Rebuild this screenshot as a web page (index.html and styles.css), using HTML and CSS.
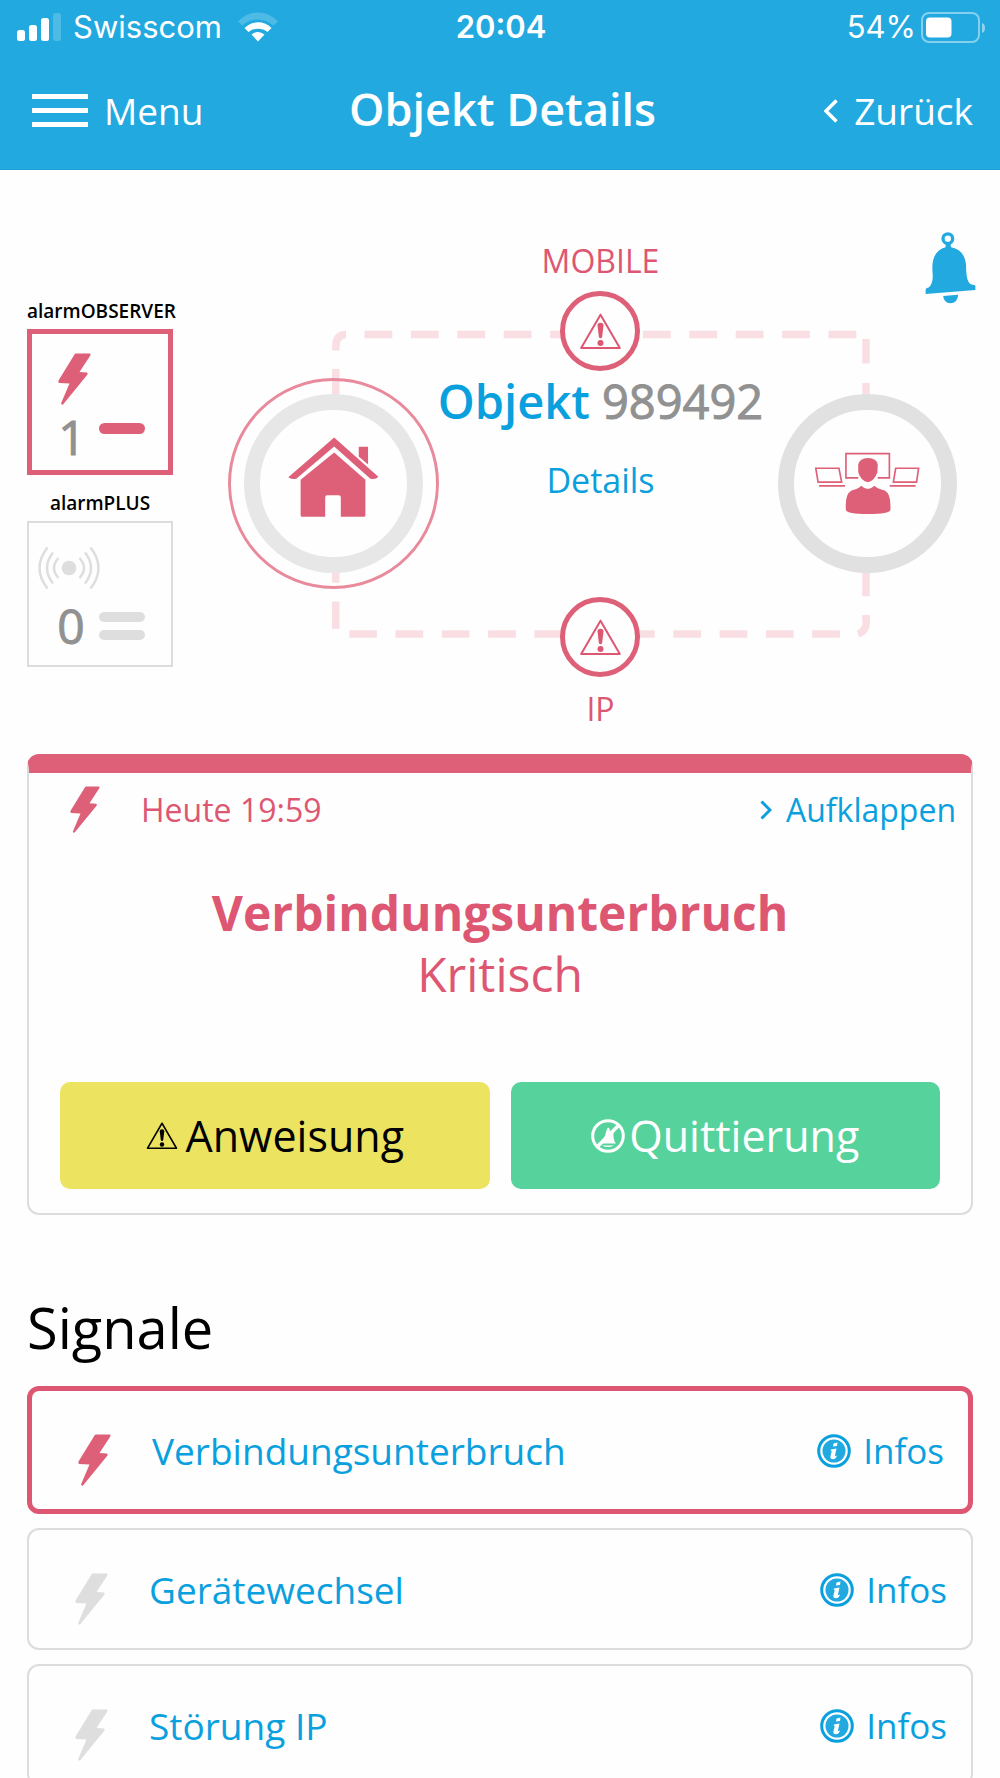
FILE: index.html
```html
<!DOCTYPE html>
<html lang="de">
<head>
<meta charset="utf-8">
<meta name="viewport" content="width=device-width, initial-scale=1">
<title>Objekt Details</title>
<link rel="stylesheet" href="styles.css">
</head>
<body>
<svg class="sprite" aria-hidden="true">
  <symbol id="bolt" viewBox="0 0 33 52"><path d="M18 .5H32Q33 1 32.300 2.500L21.500 19 29 19.500Q30 20.500 29.500 21.500L5 51.500Q3.500 52 3 50.500L11.500 30.500 1 30Q0 29 .5 27.500L16.500 1.500Q17 .5 18 .5Z" fill="currentColor"/></symbol>
  <symbol id="warning" viewBox="0 0 128 114"><path d="M64 8 122 108H6Z" fill="none" stroke="currentColor" stroke-width="6" stroke-linejoin="round"/><path d="M64 32q9 0 9 8l-4 34q-1 5-5 5t-5-5l-4-34q0-8 9-8Z" fill="currentColor"/><circle cx="64" cy="93" r="9" fill="currentColor"/></symbol>
  <symbol id="info" viewBox="0 0 34 34"><circle cx="17" cy="17" r="15.300" fill="none" stroke="#0aa0de" stroke-width="3"/><circle cx="17" cy="17" r="11.500" fill="#22a9e0"/><path d="M16.500 9.500 20.500 8.500 20 12 16 12.500ZM14 15.500 19.500 14.500 17.800 22.300 20 21.500Q19 25 16 25.300 12.800 25.300 13.500 22L14.800 16.700 13.600 16.800Z" fill="#fff"/></symbol>
</svg>
<div class="app">
  <header class="topbar">
    <div class="status">
      <div class="status-left">
        <svg width="44" height="28" viewBox="0 0 44 28" fill="#fff" aria-hidden="true"><rect y="17" width="8" height="11" rx="2.500"/><rect x="12" y="12" width="8" height="16" rx="2.500"/><rect x="24" y="5" width="8" height="23" rx="2.500"/><rect x="36" width="8" height="28" rx="2.500" opacity=".2"/></svg>
        <span>Swisscom</span>
        <svg width="40" height="30" viewBox="0 0 40 30" fill="#fff" aria-hidden="true"><path d="M0 9.500Q9 .5 20 .5T40 9.500L35.500 13.500Q28.500 7.500 20 7.500T4.500 13.500Z" opacity=".2"/><path d="M6.500 16Q12 10.300 20 10.300T33.500 16L29.500 20Q25.500 16.700 20 16.700T10.500 20Z"/><path d="M13.500 22.500Q16.500 20 20 20T26.500 22.500L20 29.500Z"/></svg>
      </div>
      <time class="status-time">20:04</time>
      <div class="status-right">
        <span>54%</span>
        <svg width="64" height="31" viewBox="0 0 64 31" aria-hidden="true"><rect x="1" y="1" width="57" height="29" rx="7" fill="none" stroke="#fff" stroke-width="2" opacity=".45"/><rect x="5" y="5.500" width="25.500" height="20" rx="4" fill="#fff"/><path d="M61 11q3 1 3 5t-3 5Z" fill="#fff" opacity=".5"/></svg>
      </div>
    </div>
    <nav class="nav">
      <button class="nav-link" type="button">
        <svg width="56" height="34" viewBox="0 0 56 34" aria-hidden="true"><path d="M0 2.500H56M0 16.500H56M0 30.500H56" stroke="#fff" stroke-width="5"/></svg>
        Menu
      </button>
      <h1 class="nav-title">Objekt Details</h1>
      <a class="nav-link nav-back" href="#">
        <svg width="14" height="24" viewBox="0 0 14 24" aria-hidden="true"><path d="M12.500 1.500 2 12 12.500 22.500" fill="none" stroke="#fff" stroke-width="3.500"/></svg>
        Zurück
      </a>
    </nav>
  </header>

  <main class="content">
    <section class="overview">
      <button class="bell" type="button" aria-label="Alarm">
        <svg width="53" height="73" viewBox="972 34 158 220" fill="#22a9e0" aria-hidden="true"><circle cx="1043" cy="57" r="14.500" fill="none" stroke="#22a9e0" stroke-width="10"/><path d="M1037 72H1050L1053 83Q1096 92 1098 140Q1098 190 1114 195 1126 195 1126 200V212L976 224V210Q978 204 984 205 1000 195 997 160 991 95 1036 83Z"/><path d="M1029 230 1074 226Q1073 251 1050 252 1031 251 1029 230Z"/></svg>
      </button>

      <div class="tiles">
        <div class="tile-group">
          <h2 class="tile-label">alarmOBSERVER</h2>
          <div class="tile tile-active">
            <svg class="tile-icon" width="39" height="52" viewBox="-6 0 39 52" aria-hidden="true"><use href="#bolt" width="33" height="52"/></svg>
            <span class="tile-count">1</span>
            <span class="bars"><i></i></span>
          </div>
        </div>
        <div class="tile-group">
          <h2 class="tile-label">alarmPLUS</h2>
          <div class="tile">
            <svg class="tile-icon" width="62" height="44" viewBox="0 0 62 44" fill="none" stroke="currentColor" stroke-width="2.500" aria-hidden="true"><circle cx="31" cy="22" r="7.300" fill="currentColor" stroke="none"/><path d="M20.500 12Q11.500 22 20.500 32M15 6.500Q3 22 15 37.500M9.500 1.500Q-6.500 22 9.500 42.500M41.500 12Q50.500 22 41.500 32M47 6.500Q59 22 47 37.500M52.500 1.500Q68.500 22 52.500 42.500"/></svg>
            <span class="tile-count">0</span>
            <span class="bars"><i></i><i></i></span>
          </div>
        </div>
      </div>

      <div class="diagram">
        <svg class="links" width="540" height="322" viewBox="330 324 540 322" fill="none" stroke="#f9dfe3" stroke-width="7.500" aria-hidden="true">
          <path d="M334.800 350.500V347Q334.800 334.500 345 334.500"/>
          <path d="M363.500 334.500H861" stroke-dasharray="27.800 18.600"/>
          <path d="M865 339V363.500M865 383V620" stroke-dasharray="27.600 18.800"/>
          <path d="M865.300 615.500V622Q865.300 631 857 634"/>
          <path d="M348.200 634H845" stroke-dasharray="27.700 18.600"/>
          <path d="M334.800 369V629" stroke-dasharray="27.800 18.700"/>
        </svg>
        <div class="nodes">
          <div class="node node-alert">
            <div class="disc">
              <svg class="house" width="93" height="82" viewBox="230 648 280 246" fill="#de6078" aria-hidden="true"><path d="M372 652 505 770Q497 780 481 776L372 679 258 776Q243 780 234 772Z"/><path d="M446 680H474V733L446 709Z"/><path d="M372 697 466 779V886Q466 891 461 891H392V832Q392 826 386 826H351Q345 826 345 832V891H276Q271 891 271 886V779Z"/></svg>
            </div>
          </div>
          <div class="node">
            <div class="disc disc-station">
              <svg width="107" height="63" viewBox="640 697 320 190" fill="none" stroke="#de6078" stroke-width="5" aria-hidden="true"><path d="M772 775H735V702H866V775H831M644 746H714L722 788H651ZM654 799H732M954 746H885L878 788H948ZM945 799H867"/><path d="M772 735Q776 716 801 715 828 716 831 735L830 758Q820 786 801 788 781 786 772 758ZM781 799Q801 818 821 799 830 808 852 813 872 824 869 872 866 884 801 884 738 884 735 872 731 824 752 813 773 808 781 799Z" fill="#de6078" stroke="none"/></svg>
            </div>
          </div>
        </div>
        <div class="middle">
          <span class="channel">MOBILE</span>
          <span class="badge"><svg width="43" height="38" aria-hidden="true"><use href="#warning"/></svg></span>
          <h2 class="object"><b>Objekt</b> <span class="number">989492</span></h2>
          <a class="details" href="#">Details</a>
          <span class="badge badge-ip"><svg width="43" height="38" aria-hidden="true"><use href="#warning"/></svg></span>
          <span class="channel channel-ip">IP</span>
        </div>
      </div>
    </section>

    <article class="alarm">
      <div class="alarm-head">
        <svg class="alarm-bolt" width="30" height="47" aria-hidden="true"><use href="#bolt"/></svg>
        <time>Heute 19:59</time>
        <a class="expand" href="#">
          <svg width="12" height="20" viewBox="0 0 12 20" aria-hidden="true"><path d="M1.500 1.500 10 10 1.500 18.500" fill="none" stroke="#0aa0de" stroke-width="3"/></svg>
          Aufklappen
        </a>
      </div>
      <h2 class="alarm-title">Verbindungsunterbruch</h2>
      <p class="alarm-level">Kritisch</p>
      <div class="actions">
        <button class="action action-yellow" type="button"><svg width="32" height="29" aria-hidden="true"><use href="#warning"/></svg>Anweisung</button>
        <button class="action action-green" type="button"><svg width="34" height="34" viewBox="0 0 34 34" aria-hidden="true"><circle cx="17" cy="17" r="15.300" fill="none" stroke="#fff" stroke-width="3"/><path d="M6 28 28 6" stroke="#fff" stroke-width="3.500"/><path d="M16.500 9Q18 8 18.500 10L20 14 22.500 12Q22 22 25 24.500H9.500Q14 19 15 13Z" fill="#fff"/><path d="M11 26.500H23Q17 29.500 11 26.500Z" fill="#fff"/></svg>Quittierung</button>
      </div>
    </article>

    <section class="signals">
      <h2 class="signals-title">Signale</h2>
      <ul class="signal-list">
        <li class="signal signal-active">
          <svg class="signal-bolt" width="33" height="52" aria-hidden="true"><use href="#bolt"/></svg>
          <a class="signal-name" href="#">Verbindungsunterbruch</a>
          <a class="infos" href="#"><svg width="34" height="34" aria-hidden="true"><use href="#info"/></svg>Infos</a>
        </li>
        <li class="signal">
          <svg class="signal-bolt" width="33" height="52" aria-hidden="true"><use href="#bolt"/></svg>
          <a class="signal-name" href="#">Gerätewechsel</a>
          <a class="infos" href="#"><svg width="34" height="34" aria-hidden="true"><use href="#info"/></svg>Infos</a>
        </li>
        <li class="signal">
          <svg class="signal-bolt" width="33" height="52" aria-hidden="true"><use href="#bolt"/></svg>
          <a class="signal-name" href="#">Störung IP</a>
          <a class="infos" href="#"><svg width="34" height="34" aria-hidden="true"><use href="#info"/></svg>Infos</a>
        </li>
      </ul>
    </section>
  </main>
</div>
</body>
</html>
```
FILE: styles.css
```css
:root {
  --bar: #22a9e0;
  --blue: #0aa0de;
  --pink: #de6078;
  --pink-text: #dd5772;
  --line: #dcdcdc;
  --grey: #919191;
}

* {
  box-sizing: border-box;
}

body {
  margin: 0;
  background: #fefefe;
  color: #000;
  font-family: "Open Sans", "Noto Sans", sans-serif;
}

h1, h2, p, ul {
  margin: 0;
  padding: 0;
  font-weight: 400;
}

a {
  color: inherit;
  text-decoration: none;
}

button {
  border: 0;
  padding: 0;
  background: none;
  color: inherit;
  font: inherit;
}

svg {
  display: block;
  flex: none;
}

.sprite {
  position: absolute;
  width: 0;
  height: 0;
}

.app {
  display: flex;
  flex-direction: column;
  height: 100vh;
}

/* Header */

.topbar {
  flex: none;
  background: var(--bar);
  border-bottom: 1px solid #1a9fd8;
  color: #fff;
}

.status,
.nav {
  display: grid;
  grid-template-columns: 1fr auto 1fr;
  align-items: center;
}

.status {
  height: 54px;
  padding: 0 15px 0 17px;
  font: 400 31px/40px Inter, sans-serif;
}

.status-left,
.status-right {
  display: flex;
  align-items: center;
  gap: 12px;
}

.status-left svg:last-child {
  margin-left: 4px;
}

.status-right {
  justify-content: flex-end;
  gap: 5px;
}

.status-time {
  font-weight: 600;
}

.nav {
  height: 115px;
  padding: 0 27px 2px 32px;
}

.nav-link {
  display: flex;
  align-items: center;
  gap: 16px;
  font-size: 37px;
  line-height: 52px;
}

.nav-back {
  justify-self: end;
}

.nav-title {
  padding-bottom: 3px;
  font-size: 45px;
  font-weight: 600;
  line-height: 60px;
}

/* Content */

.content {
  flex: 1;
  overflow: auto;
  scrollbar-width: none;
  padding: 0 27px;
}

.overview {
  position: relative;
  display: flex;
  align-items: center;
  gap: 55px;
  padding: 71px 0 25px;
}

.bell {
  position: absolute;
  top: 61px;
  right: -4px;
}

.tiles {
  display: flex;
  flex-direction: column;
  gap: 10px;
  width: 146px;
  padding-bottom: 10px;
}

.tile-label {
  font-size: 19px;
  font-weight: 600;
  line-height: 36px;
  text-align: center;
  white-space: nowrap;
}

.tile {
  display: grid;
  grid-template-columns: 54px 1fr;
  grid-template-rows: 56px 60px;
  align-items: center;
  height: 146px;
  padding: 17px 26px 0 15px;
  border: 2px solid var(--line);
  color: #dedede;
}

.tile-active {
  padding-left: 13px;
  border: 5px solid var(--pink);
  color: var(--pink);
}

.tile-icon {
  grid-column: 1 / -1;
  justify-self: start;
}

.tile .tile-icon {
  margin-left: -6px;
}

.tile-active .tile-icon {
  margin-left: 7px;
}

.tile-count,
.number {
  color: var(--grey);
  -webkit-text-stroke: 1px var(--grey);
}

.tile-count {
  font-size: 48px;
  line-height: 60px;
  text-align: center;
}

.bars {
  display: flex;
  flex-direction: column;
  gap: 8px;
  width: 46px;
  height: 28px;
  justify-self: end;
}

.bars i {
  height: 11px;
  border-radius: 6px;
  background: currentColor;
}

/* Connection diagram: links, end nodes and labels share one grid cell */

.diagram {
  flex: 1;
  display: grid;
  align-items: center;
}

.diagram > * {
  grid-area: 1 / 1;
}

.links {
  justify-self: center;
}

.nodes {
  display: flex;
  justify-content: space-between;
  padding-bottom: 4px;
}

.node {
  display: grid;
  place-items: center;
  width: 211px;
  height: 211px;
}

.node-alert {
  border: 3px solid #e98a9c;
  border-radius: 50%;
}

.disc {
  display: grid;
  place-items: center;
  width: 179px;
  height: 179px;
  border: 16px solid #e7e7e7;
  border-radius: 50%;
  background: #fefefe;
}

.disc-station {
  border-color: #e1e1e1;
}

.house {
  margin-bottom: 12px;
}

.middle {
  justify-self: center;
  display: flex;
  flex-direction: column;
  align-items: center;
}

.channel {
  margin-bottom: 10px;
  color: var(--pink-text);
  font-size: 32px;
  line-height: 40px;
}

.channel-ip {
  margin: 12px 0 0;
}

.badge {
  display: grid;
  place-items: center;
  width: 80px;
  height: 80px;
  border: 5px solid var(--pink);
  border-radius: 50%;
  background: #fefefe;
  color: var(--pink-text);
}

.object {
  font-size: 47px;
  line-height: 60px;
  white-space: nowrap;
}

.object b {
  color: var(--blue);
  font-weight: 600;
}

.details {
  margin: 29px 0 97px;
  color: var(--blue);
  font-size: 34px;
  line-height: 40px;
}

/* Alarm card */

.alarm {
  border: 2px solid var(--line);
  border-top: 19px solid var(--pink);
  border-radius: 12px;
  padding: 12px 31px 24px;
  color: var(--pink-text);
  text-align: center;
}

.alarm-head {
  display: flex;
  align-items: center;
  height: 50px;
  padding-left: 10px;
  font-size: 32px;
  line-height: 44px;
}

.alarm-bolt {
  margin: 0 41px 2px 0;
  color: var(--pink);
}

.expand {
  display: flex;
  align-items: center;
  gap: 14px;
  margin: 0 -16px 0 auto;
  color: var(--blue);
}

.alarm-title {
  margin-top: 48px;
  font-size: 48px;
  font-weight: 700;
  line-height: 60px;
}

.alarm-level {
  margin-top: 1px;
  font-size: 48px;
  line-height: 60px;
}

.actions {
  display: grid;
  grid-template-columns: 1fr 1fr;
  gap: 21px;
  margin-top: 78px;
}

.action {
  display: flex;
  align-items: center;
  justify-content: center;
  gap: 8px;
  height: 107px;
  border-radius: 10px;
  font-size: 43px;
}

.action-yellow {
  background: #ece360;
  color: #000;
}

.action-green {
  gap: 4px;
  background: #56d39c;
  color: #fff;
}

/* Signals */

.signals-title {
  margin-top: 74px;
  font-size: 56px;
  line-height: 76px;
}

.signal-list {
  display: flex;
  flex-direction: column;
  gap: 14px;
  margin-top: 21px;
  list-style: none;
}

.signal {
  display: flex;
  align-items: center;
  padding: 2px 24px 0 46px;
  border: 2px solid var(--line);
  border-radius: 12px;
  color: var(--blue);
  line-height: 116px;
}

.signal-active {
  border: 5px solid var(--pink-text);
}

.signal-bolt {
  margin: 18px 41px 0 0;
  color: #dedede;
}

.signal-active .signal-bolt {
  color: var(--pink);
}

.signal-name {
  font-size: 37px;
}

.infos {
  display: flex;
  align-items: center;
  gap: 12px;
  margin-left: auto;
  font-size: 35px;
}
```
